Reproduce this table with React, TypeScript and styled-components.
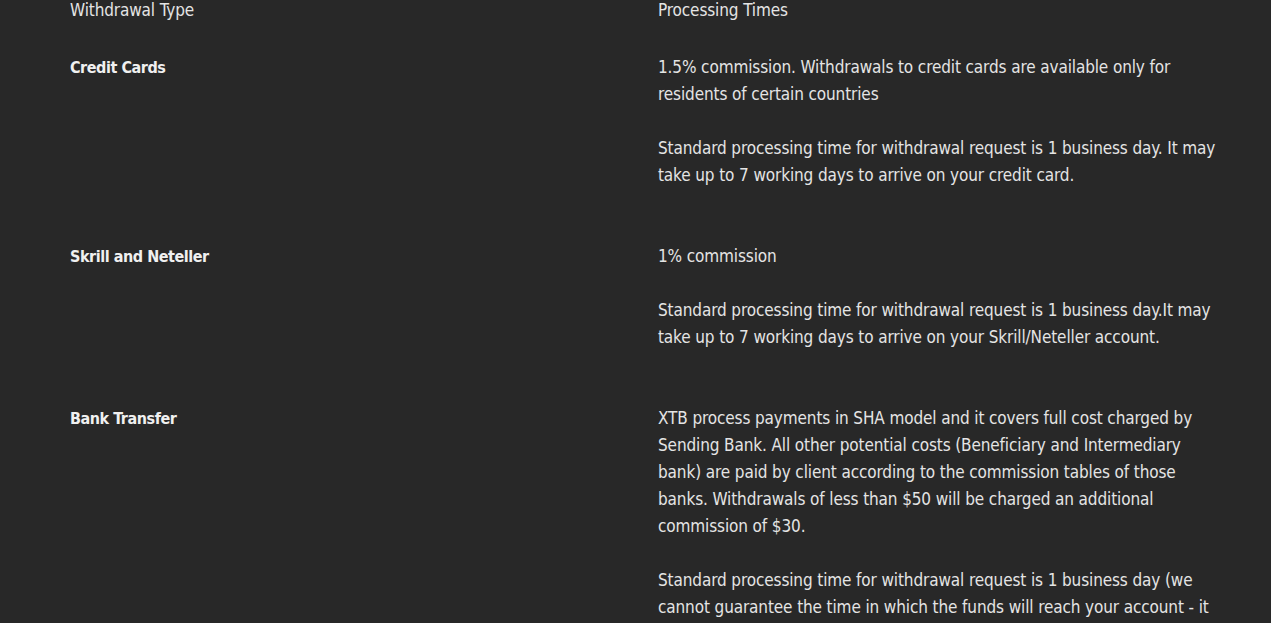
import React from "react";
import styled, { createGlobalStyle } from "styled-components";

const Global = createGlobalStyle`
  html, body {
    margin: 0;
    padding: 0;
    background: #282828;
  }
  body {
    font-family: "DejaVu Sans Condensed", "Liberation Sans Narrow", "Liberation Sans", sans-serif;
    color: #e4e4e4;
    -webkit-font-smoothing: antialiased;
  }
`;

const Page = styled.div`
  min-height: 623px;
  background: #282828;
  padding: 0 0 0 70px;
  display: flex;
  flex-direction: column;
  gap: 54px;
`;

const HeaderRow = styled.div`
  display: grid;
  grid-template-columns: 588px 562px;
  font-size: 17px;
  line-height: 20px;
  letter-spacing: -0.12px;
  color: #e4e4e4;
  margin-bottom: -20px;
`;

const Row = styled.div`
  display: grid;
  grid-template-columns: 588px 562px;
  font-size: 17px;
  line-height: 27px;
  letter-spacing: -0.12px;
`;

const Label = styled.div`
  font-weight: 700;
  font-size: 16px;
  letter-spacing: -0.45px;
  color: #f0f0f0;
`;

const Details = styled.div`
  display: flex;
  flex-direction: column;
  gap: 27px;
`;

const Para = styled.p`
  margin: 0;
`;

const rows = [
  {
    label: "Credit Cards",
    paras: [
      "1.5% commission. Withdrawals to credit cards are available only for residents of certain countries",
      "Standard processing time for withdrawal request is 1 business day. It may take up to 7 working days to arrive on your credit card.",
    ],
  },
  {
    label: "Skrill and Neteller",
    paras: [
      "1% commission",
      "Standard processing time for withdrawal request is 1 business day.It may take up to 7 working days to arrive on your Skrill/Neteller account.",
    ],
  },
  {
    label: "Bank Transfer",
    paras: [
      "XTB process payments in SHA model and it covers full cost charged by Sending Bank. All other potential costs (Beneficiary and Intermediary bank) are paid by client according to the commission tables of those banks. Withdrawals of less than $50 will be charged an additional commission of $30.",
      "Standard processing time for withdrawal request is 1 business day (we cannot guarantee the time in which the funds will reach your account - it may take up to 7 working days).",
    ],
  },
];

export default function App() {
  return (
    <>
      <Global />
      <Page>
        <HeaderRow>
          <div>Withdrawal Type</div>
          <div>Processing Times</div>
        </HeaderRow>
        {rows.map((r) => (
          <Row key={r.label}>
            <Label>{r.label}</Label>
            <Details>
              {r.paras.map((p, i) => (
                <Para key={i}>{p}</Para>
              ))}
            </Details>
          </Row>
        ))}
      </Page>
    </>
  );
}
